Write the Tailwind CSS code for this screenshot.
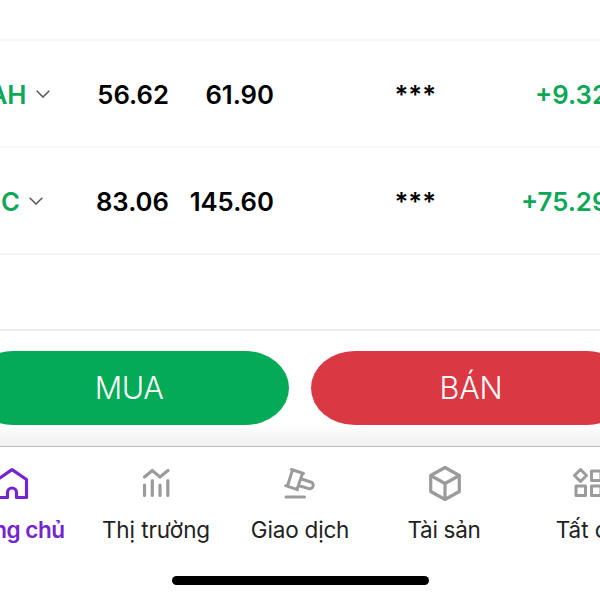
<!DOCTYPE html>
<html lang="vi">
<head>
  <meta charset="UTF-8" />
  <title>Danh mục</title>
  <script src="https://cdn.jsdelivr.net/npm/@tailwindcss/browser@4"></script>
</head>
<body class="bg-white overflow-hidden font-['Inter',sans-serif]">
  <div class="w-[720px] h-[600px] -ml-[60px] flex flex-col overflow-hidden">

    <!-- Holdings -->
    <div class="h-[329px] shrink-0 pt-[39px] text-[25.7px] font-semibold text-black leading-none">
      <div class="h-[107px] border-t-2 border-[#f7f7f7] pt-[3px] flex items-center">
        <div class="w-[109.5px] flex items-center justify-end gap-[9px] text-[#0ca757]">
          <span>AH</span>
          <svg class="w-[14px] h-2 mb-px" viewBox="0 0 14 8" fill="none" stroke="#555" stroke-width="1.5"><path d="M.7 .8 7 7 13.300 .8" /></svg>
        </div>
        <div class="w-[119.5px] text-right">56.62</div>
        <div class="w-[105px] text-right">61.90</div>
        <div class="w-[162px] text-right">***</div>
        <div class="w-[184px] pl-[99px] text-[#0ca757] whitespace-nowrap">+9.32%</div>
      </div>
      <div class="h-[107px] border-t-2 border-[#f7f7f7] pt-[3px] flex items-center">
        <div class="w-[102.5px] flex items-center justify-end gap-[8.500px] text-[#0ca757]">
          <span>C</span>
          <svg class="w-[14px] h-2 mb-px" viewBox="0 0 14 8" fill="none" stroke="#555" stroke-width="1.5"><path d="M.7 .8 7 7 13.300 .8" /></svg>
        </div>
        <div class="w-[126.5px] text-right">83.06</div>
        <div class="w-[105px] text-right">145.60</div>
        <div class="w-[162px] text-right">***</div>
        <div class="w-[184px] pl-[85px] text-[#0ca757] whitespace-nowrap">+75.29%</div>
      </div>
      <div class="border-t-2 border-[#f7f7f7]"></div>
    </div>

    <!-- Buy / sell -->
    <div class="h-[117px] shrink-0 border-t-2 border-[#ededed] px-[29px] pt-5 flex items-start gap-[22px] bg-linear-to-b from-white from-80% to-[#f0f0f0]">
      <button class="flex-1 h-[73.5px] pt-px rounded-[44px/37px] bg-[#04ab56] text-white text-[30.5px] tracking-[-0.4px] font-light">MUA</button>
      <button class="flex-1 h-[73.5px] pt-px rounded-[44px/37px] bg-[#da3944] text-white text-[30.5px] tracking-[-0.2px] font-light">BÁN</button>
    </div>

    <!-- Tab bar -->
    <nav class="h-[130px] shrink-0 border-t border-[#bdbdbd] pt-[18px] grid grid-cols-5 text-[22.5px] leading-7 text-[#222] text-center whitespace-nowrap">
      <a class="flex flex-col items-center gap-[15px] font-semibold tracking-[-0.5px] text-[#7424d0]">
        <svg class="w-9 h-9" viewBox="0 0 36 36" fill="none" stroke="currentColor" stroke-width="3.200" stroke-linejoin="round"><path d="M18 4.700 32.500 14.500V32.500H22.500V27.500a4.500 4.500 0 0 0-9 0V32.500H3.500V14.500Z" /></svg>
        <span>Trang chủ</span>
      </a>
      <a class="flex flex-col items-center gap-[15px]">
        <svg class="w-9 h-9" viewBox="0 0 36 36" fill="none" stroke="#9b9b9b" stroke-width="3.200" stroke-linecap="round"><path d="M6.500 12 14.200 5.500 22 12 30 5.500M6.500 20V30.500M14.300 15.500V30.500M22 20V30.500M29.800 15.500V30.500" /></svg>
        <span class="tracking-[-0.1px]">Thị trường</span>
      </a>
      <a class="flex flex-col items-center gap-[15px]">
        <svg class="w-9 h-9" viewBox="0 0 36 36" fill="none" stroke="#9b9b9b" stroke-width="3" stroke-linecap="round" stroke-linejoin="round"><path d="M9.500 4.500 21.500 8.500M3.700 20.700 15.500 24.700M10.500 5 5.500 21M20.500 8.500 15 24.500M19.500 14 28.700 17A3.300 3.300 0 0 1 26.900 23.600L17 20.700M4 32H22.500" /></svg>
        <span class="tracking-[-0.2px]">Giao dịch</span>
      </a>
      <a class="flex flex-col items-center gap-[15px]">
        <svg class="w-9 h-9" viewBox="0 0 36 36" fill="none" stroke="#9b9b9b" stroke-width="3.200" stroke-linejoin="round"><path d="M19 2.500 33.300 10.500V26.500L19 34.500 4.700 26.500V10.500ZM4.700 10.500 19 18.500 33.300 10.500M19 18.500V34.500" /></svg>
        <span class="tracking-[-0.3px]">Tài sản</span>
      </a>
      <a class="flex flex-col items-center gap-[15px]">
        <svg class="w-9 h-9" viewBox="0 0 36 36" fill="none" stroke="#9b9b9b" stroke-width="3" stroke-linejoin="round"><path d="M10.500 4.500 16.500 10.500 10.500 16.500 4.500 10.500ZM21.500 6H31V15.500H21.500ZM6 21H15.500V30.500H6ZM21.500 21H31V30.500H21.500Z" /></svg>
        <span class="tracking-[-0.1px]">Tất cả</span>
      </a>
    </nav>
    <div class="w-[257px] h-[9px] shrink-0 rounded-full bg-black mx-auto"></div>
  </div>
</body>
</html>
